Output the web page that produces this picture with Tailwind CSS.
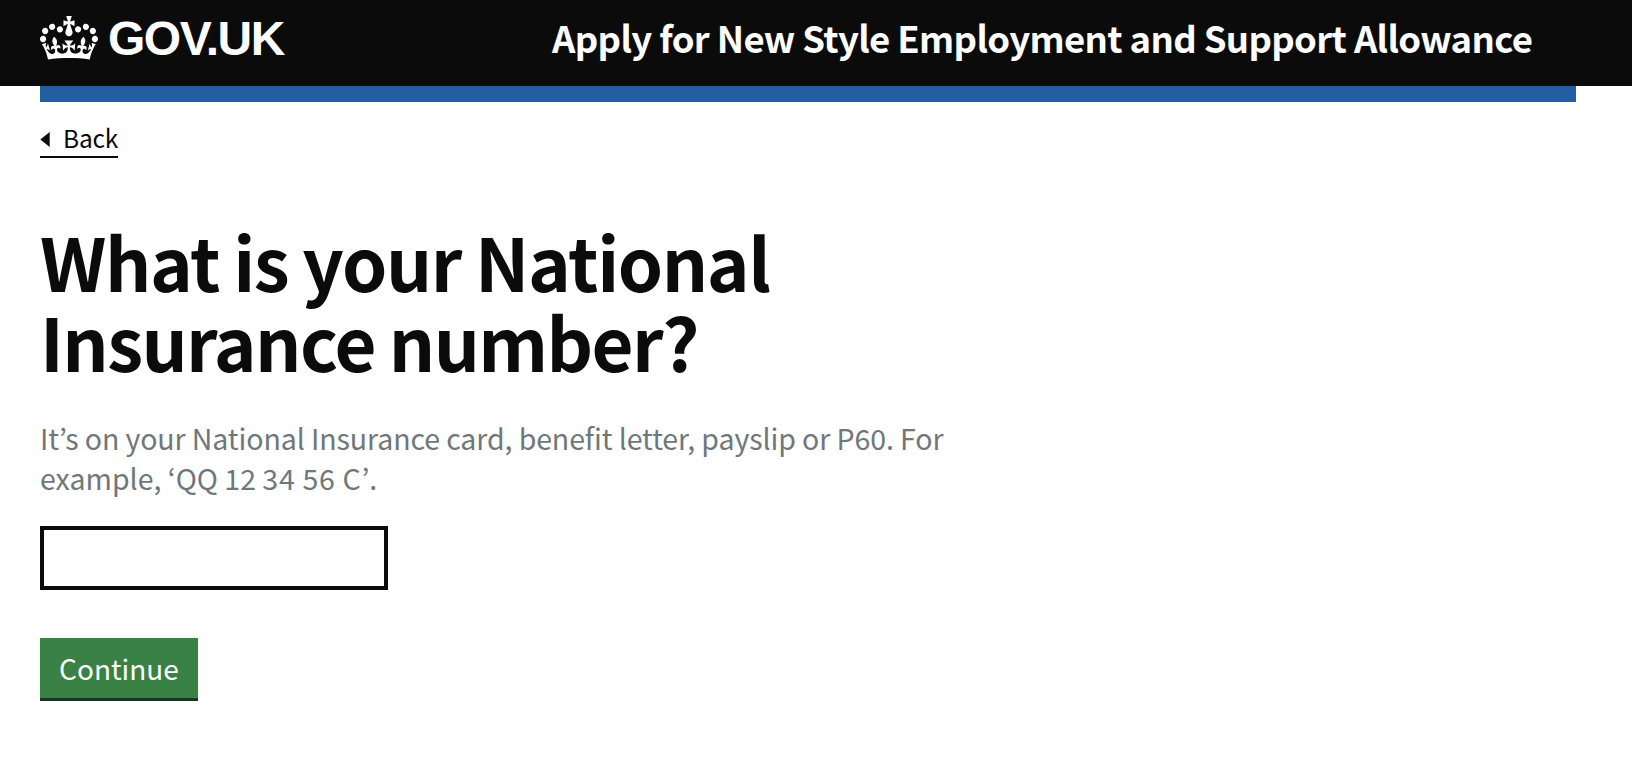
<!DOCTYPE html>
<html lang="en">
<head>
<meta charset="utf-8">
<title>What is your National Insurance number?</title>
<script src="https://cdn.jsdelivr.net/npm/@tailwindcss/browser@4"></script>
</head>
<body class="bg-white text-[#0b0b0b] font-['Noto_Sans_CJK_JP',sans-serif] h-[760px] overflow-hidden">
<header class="bg-[#0b0b0b] text-white h-[86px] pl-10 flex items-start whitespace-nowrap">
  <a class="flex w-[512px] pt-4" href="#">
    <svg class="w-[58px] h-[44px] shrink-0" viewBox="0 0 132 97" preserveAspectRatio="none" fill="currentColor" fill-rule="evenodd" aria-hidden="true"><path d="M25 30.2c3.5 1.5 7.7-.2 9.1-3.7 1.5-3.6-.2-7.8-3.9-9.2-3.6-1.4-7.6.3-9.1 3.9-1.4 3.5.3 7.5 3.9 9zM9 39.5c3.6 1.5 7.8-.2 9.2-3.7 1.5-3.6-.2-7.8-3.9-9.1-3.6-1.5-7.6.2-9.1 3.8-1.4 3.5.3 7.5 3.8 9zM4.4 57.2c3.5 1.5 7.7-.2 9.1-3.8 1.5-3.6-.2-7.7-3.9-9.1-3.5-1.5-7.6.3-9.1 3.8-1.4 3.5.3 7.6 3.9 9.1zm38.3-21.4c3.5 1.5 7.7-.2 9.1-3.8 1.5-3.6-.2-7.7-3.9-9.1-3.6-1.5-7.6.3-9.1 3.8-1.3 3.6.4 7.7 3.9 9.1zm64.4-5.6c-3.6 1.5-7.8-.2-9.1-3.7-1.5-3.6.2-7.8 3.8-9.2 3.6-1.4 7.7.3 9.2 3.9 1.3 3.5-.4 7.5-3.9 9zm15.9 9.3c-3.6 1.5-7.7-.2-9.1-3.7-1.5-3.6.2-7.8 3.7-9.1 3.6-1.5 7.7.2 9.2 3.8 1.5 3.5-.3 7.5-3.8 9zm4.7 17.7c-3.6 1.5-7.8-.2-9.2-3.8-1.5-3.6.2-7.7 3.9-9.1 3.6-1.5 7.7.3 9.2 3.8 1.3 3.5-.4 7.6-3.9 9.1zM89.3 35.8c-3.6 1.5-7.8-.2-9.2-3.8-1.4-3.6.2-7.7 3.9-9.1 3.6-1.5 7.7.3 9.2 3.8 1.4 3.6-.3 7.7-3.9 9.1zM69.7 17.7l8.9 4.7V9.3l-8.9 2.8c-.2-.3-.5-.6-.9-.9L72.4 0H59.6l3.5 11.2c-.3.3-.6.5-.9.9l-8.8-2.8v13.1l8.8-4.7c.3.3.6.7.9.9l-5 15.4v.1c-.2.8-.4 1.6-.4 2.4 0 4.1 3.1 7.5 7 8.1h.2c.3 0 .7.1 1 .1.4 0 .7 0 1-.1h.2c4-.6 7.1-4.1 7.1-8.1 0-.8-.1-1.7-.4-2.4V34l-5.1-15.4c.4-.2.7-.6 1-.9zM66 92.8c16.9 0 32.8 1.1 47.1 3.2 4-16.9 8.9-26.7 14-33.5l-9.6-3.4c1 4.9 1.1 7.2 0 10.2-1.5-1.4-3-4.3-4.2-8.7L108.6 76c2.8-2 5-3.2 7.5-3.3-4.4 9.4-10 11.9-13.6 11.2-4.3-.8-6.3-4.6-5.6-7.9 1-4.7 5.7-5.9 8-.5 4.3-8.7-3-11.4-7.6-8.8 7.1-7.2 7.9-13.5 2.1-21.1-8 6.1-8.1 12.3-4.5 20.8-4.7-5.4-12.1-2.5-9.5 6.2 3.4-5.2 7.9-2 7.2 3.1-.6 4.3-6.4 7.8-13.5 7.2-10.3-.9-10.9-8-11.2-13.8 2.5-.5 7.1 1.8 11 7.3L80.2 60c-4.1 4.4-8 5.3-12.3 5.4 1.4-4.4 8-11.6 8-11.6H55.5s6.4 7.2 7.9 11.6c-4.2-.1-8-1-12.3-5.4l1.4 16.4c3.9-5.5 8.5-7.7 10.9-7.3-.3 5.8-.9 12.8-11.1 13.8-7.2.6-12.9-2.9-13.5-7.2-.7-5 3.8-8.3 7.1-3.1 2.7-8.7-4.6-11.6-9.4-6.2 3.7-8.5 3.6-14.7-4.6-20.8-5.8 7.6-5 13.9 2.2 21.1-4.7-2.6-11.9.1-7.7 8.8 2.3-5.5 7.1-4.2 8.1.5.7 3.3-1.3 7.1-5.7 7.9-3.5.7-9-1.8-13.5-11.2 2.5.1 4.7 1.3 7.5 3.3l-4.7-15.4c-1.2 4.4-2.7 7.2-4.3 8.7-1.1-3-.9-5.3 0-10.2l-9.5 3.4c5 6.9 9.9 16.7 14 33.5 14.8-2.1 30.8-3.2 47.7-3.2z"/></svg>
    <span class="ml-[10px] font-['Liberation_Sans',sans-serif] font-bold text-[48px] leading-[46px] tracking-[-1.5px]">GOV.UK</span>
  </a>
  <a class="pt-[13px] font-bold text-[36.5px] leading-[50px] tracking-[-0.66px]" href="#">Apply for New Style Employment and Support Allowance</a>
</header>
<div class="ml-10 w-[1536px] h-4 bg-[#235fa0]"></div>
<main class="pl-10 flex flex-col items-start whitespace-nowrap">
  <a class="mt-5 h-9 w-[78px] border-b-2 border-[#0b0b0b] flex items-start" href="#">
    <svg class="w-[10px] h-[15px] shrink-0 mt-[10px]" viewBox="0 0 10 15" fill="currentColor" aria-hidden="true"><path d="M.3 7.5 9.7 0v15z"/></svg>
    <span class="ml-[13px] text-[24.5px] leading-[32px] tracking-[-0.2px]">Back</span>
  </a>
  <h1 class="mt-[63px] font-bold text-[72.5px] leading-[80px] tracking-[-1.4px] [word-spacing:-1px]">
    <span class="block">What is your National</span>
    <span class="block tracking-[-1.6px]">Insurance number?</span>
  </h1>
  <p class="mt-[37px] text-[28.5px] leading-[40px] text-[#6f777b]">
    <span class="block tracking-[-0.09px]">It’s on your National Insurance card, benefit letter, payslip or P60. For</span>
    <span class="block">example, ‘QQ 12 <span class="tracking-[0.7px]">34 56 C</span><span class="tracking-[4px]">’.</span></span>
  </p>
  <input class="mt-7 w-[348px] h-[64px] border-4 border-[#0b0b0b] outline-none px-2 text-[29px]" type="text" aria-label="National Insurance number">
  <button class="mt-12 w-[158px] h-[60px] bg-[#398144] text-white text-[28px] leading-[60px] shadow-[0_3px_0_#14391f]">Continue</button>
</main>
</body>
</html>
